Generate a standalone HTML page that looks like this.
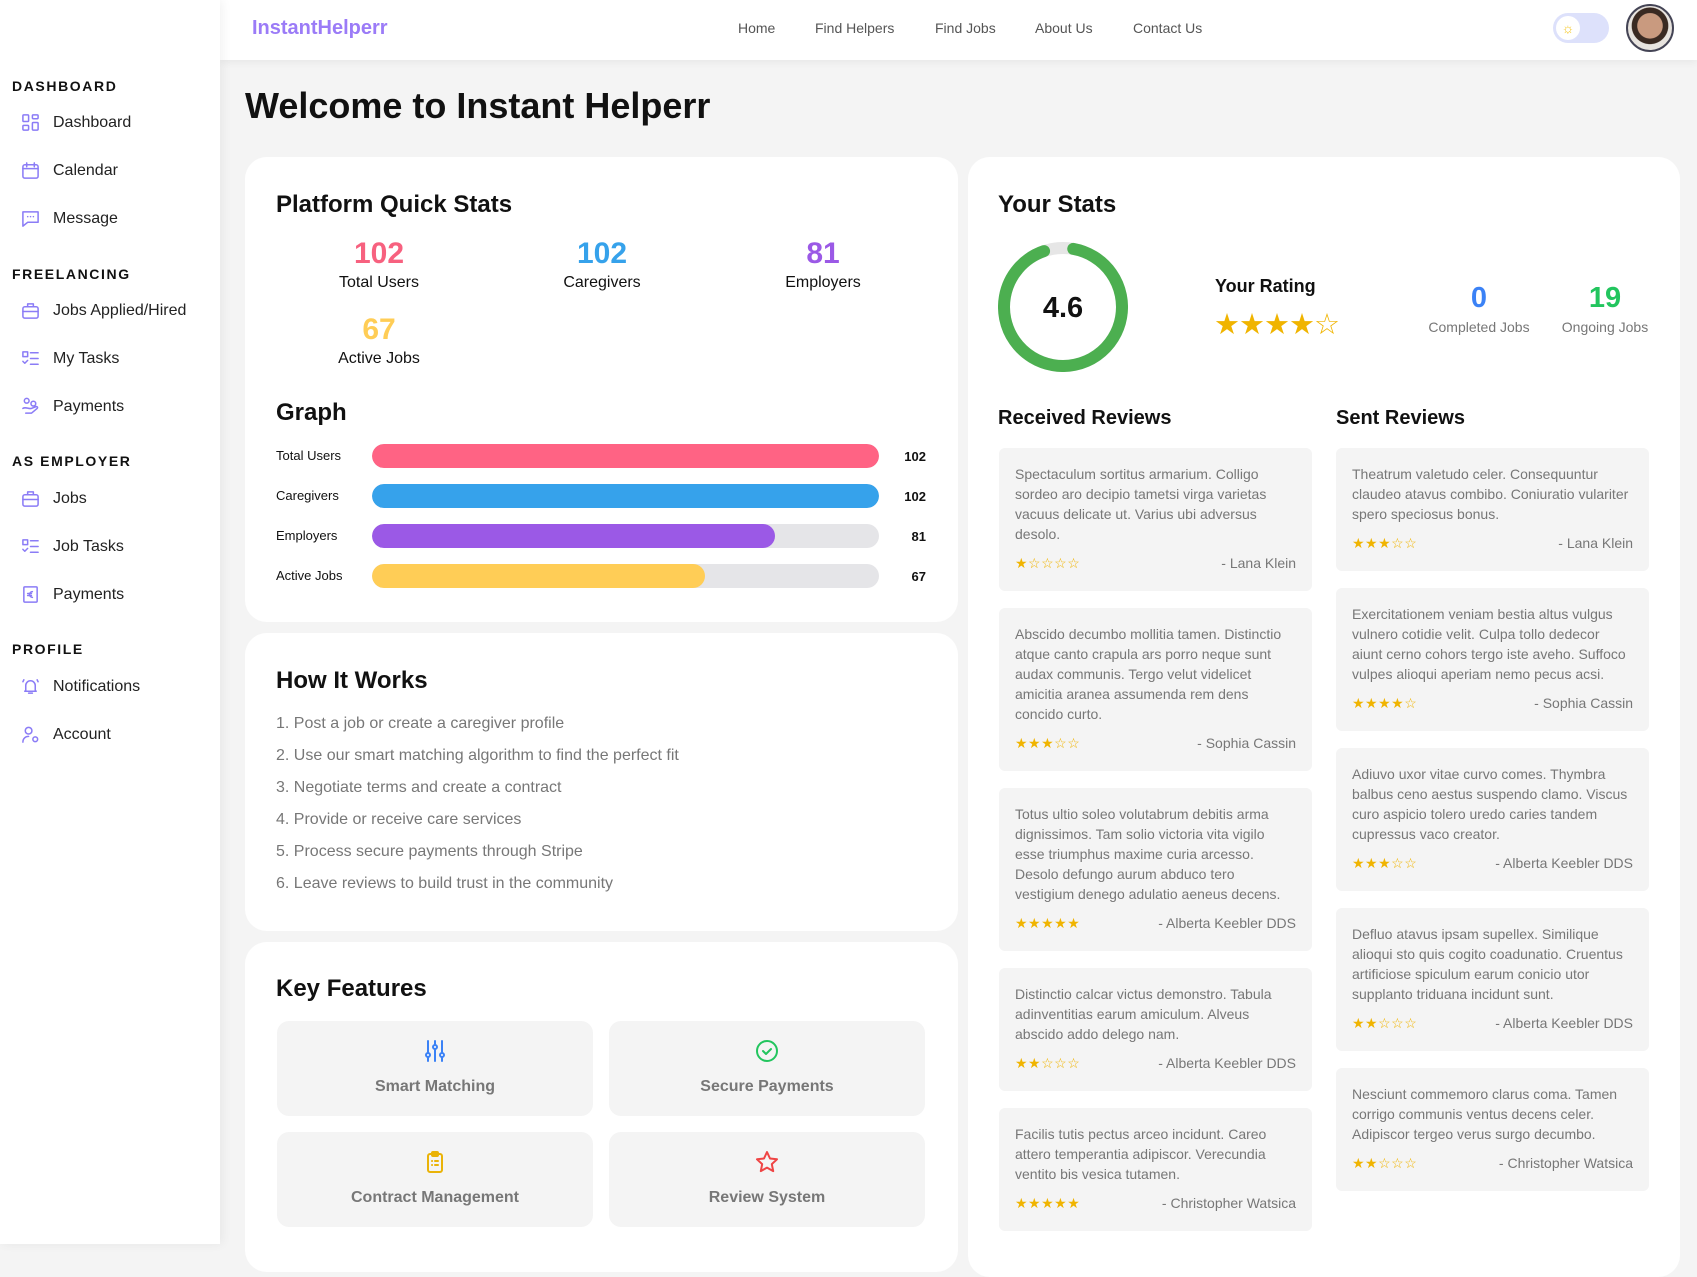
<!DOCTYPE html>
<html><head><meta charset="utf-8">
<style>
*{box-sizing:border-box;margin:0;padding:0}
body{width:1697px;height:1244px;overflow:hidden;background:#f4f4f4;font-family:"Liberation Sans",Arial,sans-serif;position:relative;color:#111}
.side{position:absolute;left:0;top:0;width:220px;height:1244px;background:#fff;box-shadow:2px 0 10px rgba(0,0,0,.06);z-index:3}
.sec{position:absolute;left:12px;font-size:14px;font-weight:bold;letter-spacing:1.6px;color:#111}
.it{position:absolute;left:21px;display:flex;align-items:center;font-size:16px;color:#222}
.it svg{width:19px;height:19px;margin-right:13px;stroke:#8b7cf6;fill:none;stroke-width:1.6;stroke-linecap:round;stroke-linejoin:round}
.hdr{position:absolute;left:220px;top:0;right:0;height:60px;background:#fff;box-shadow:0 2px 8px rgba(0,0,0,.06);z-index:2}
.brand{position:absolute;left:32px;top:17px;font-size:20px;font-weight:bold;color:#9b7bf7}
.nav{position:absolute;top:20px;font-size:14px;color:#555}
.card{position:absolute;background:#fff;border-radius:22px}
h2{font-size:24px;font-weight:bold;position:absolute}
.num{position:absolute;font-size:30px;font-weight:bold;text-align:center;width:200px}
.lbl{position:absolute;font-size:16px;text-align:center;width:200px}
.bl{position:absolute;left:276px;font-size:13px}
.bar{position:absolute;left:372px;width:507px;height:24px;border-radius:12px;background:#e5e5e8;overflow:hidden}
.bar div{height:100%;border-radius:12px}
.bv{position:absolute;right:771px;font-size:13px;font-weight:bold;text-align:right}
.hw{position:absolute;left:276px;font-size:16px;color:#777}
.feat{position:absolute;width:316px;height:95px;background:#f4f4f4;border-radius:12px;text-align:center}
.feat svg{position:absolute;left:146px;top:18px;width:24px;height:24px;fill:none;stroke-width:2;stroke-linecap:round;stroke-linejoin:round}
.feat span{position:absolute;left:0;right:0;top:57px;font-size:16px;font-weight:bold;color:#777}
.col{position:absolute;width:313px;display:flex;flex-direction:column;gap:17px}
.rv{background:#f4f4f4;border-radius:6px;padding:16px 16px 18px 16px;font-size:14px;line-height:20px;color:#777}
.rm{display:flex;justify-content:space-between;margin-top:9px;line-height:20px}
.rm b{font-weight:normal;color:#f0b400;font-size:14px;letter-spacing:0.5px}
</style></head><body>
<div class="side">
<div class="sec" style="top:78px">DASHBOARD</div>
<div class="it" style="top:113px"><svg viewBox="0 0 20 20"><rect x="2" y="2" width="6" height="7" rx="1"/><rect x="12" y="2" width="6" height="4" rx="1"/><rect x="2" y="13" width="6" height="5" rx="1"/><rect x="12" y="10" width="6" height="8" rx="1"/></svg>Dashboard</div>
<div class="it" style="top:161px"><svg viewBox="0 0 20 20"><rect x="2" y="4" width="16" height="14" rx="2"/><path d="M2 8h16M6 2v4M14 2v4"/></svg>Calendar</div>
<div class="it" style="top:209px"><svg viewBox="0 0 20 20"><path d="M2 3h16v11H7l-5 4z"/><path d="M7 8h.1M10 8h.1M13 8h.1"/></svg>Message</div>
<div class="sec" style="top:266px">FREELANCING</div>
<div class="it" style="top:301px"><svg viewBox="0 0 20 20"><rect x="2" y="6" width="16" height="12" rx="2"/><path d="M7 6V3h6v3M2 11h16"/></svg>Jobs Applied/Hired</div>
<div class="it" style="top:349px"><svg viewBox="0 0 20 20"><rect x="2" y="3" width="5" height="5"/><path d="M2 13l2 2 3-3M10 4h8M10 10h8M10 16h8"/></svg>My Tasks</div>
<div class="it" style="top:397px"><svg viewBox="0 0 20 20"><circle cx="6" cy="4" r="2.5"/><circle cx="13" cy="7" r="2.5"/><path d="M2 12c3-2 6 1 9 0l5-2c1 0 2 1 1 2l-6 5H5"/></svg>Payments</div>
<div class="sec" style="top:453px">AS EMPLOYER</div>
<div class="it" style="top:489px"><svg viewBox="0 0 20 20"><rect x="2" y="6" width="16" height="12" rx="2"/><path d="M7 6V3h6v3M2 11h16"/></svg>Jobs</div>
<div class="it" style="top:537px"><svg viewBox="0 0 20 20"><rect x="2" y="3" width="5" height="5"/><path d="M2 13l2 2 3-3M10 4h8M10 10h8M10 16h8"/></svg>Job Tasks</div>
<div class="it" style="top:585px"><svg viewBox="0 0 20 20"><rect x="3" y="2" width="14" height="16" rx="1"/><path d="M12 7a3 3 0 1 0 0 6M7 9h4M7 11h4"/></svg>Payments</div>
<div class="sec" style="top:641px">PROFILE</div>
<div class="it" style="top:677px"><svg viewBox="0 0 20 20"><path d="M5 14V9a5 5 0 0 1 10 0v5l1 1H4zM8 17h4M2 5l1-2M18 5l-1-2"/></svg>Notifications</div>
<div class="it" style="top:725px"><svg viewBox="0 0 20 20"><circle cx="8" cy="6" r="3.5"/><path d="M2 18c0-4 3-6 6-6"/><circle cx="15" cy="15" r="2.5"/></svg>Account</div>
</div>
<div class="hdr">
<div class="brand">InstantHelperr</div>
<div class="nav" style="left:518px">Home</div>
<div class="nav" style="left:595px">Find Helpers</div>
<div class="nav" style="left:715px">Find Jobs</div>
<div class="nav" style="left:815px">About Us</div>
<div class="nav" style="left:913px">Contact Us</div>
<div style="position:absolute;left:1333px;top:13px;width:56px;height:30px;border-radius:15px;background:#dde1fb"><div style="position:absolute;left:3px;top:3px;width:24px;height:24px;border-radius:50%;background:#fff;text-align:center;line-height:24px;color:#f5c518;font-size:14px">☼</div></div>
<div style="position:absolute;left:1406px;top:4px;width:48px;height:48px;border-radius:50%;border:2px solid #445;background:radial-gradient(circle at 50% 45%,#c99a7f 0 38%,#3a2a22 40% 55%,#e8e4df 57%);"></div>
</div>
<div style="position:absolute;left:245px;top:85px;font-size:36px;font-weight:bold">Welcome to Instant Helperr</div>

<div class="card" style="left:245px;top:157px;width:713px;height:465px"></div>
<h2 style="left:276px;top:191px">Platform Quick Stats</h2>
<div class="num" style="left:279px;top:237px;color:#f7617f">102</div><div class="lbl" style="left:279px;top:274px">Total Users</div>
<div class="num" style="left:502px;top:237px;color:#36a2eb">102</div><div class="lbl" style="left:502px;top:274px">Caregivers</div>
<div class="num" style="left:723px;top:237px;color:#9b59e6">81</div><div class="lbl" style="left:723px;top:274px">Employers</div>
<div class="num" style="left:279px;top:313px;color:#ffcd56">67</div><div class="lbl" style="left:279px;top:350px">Active Jobs</div>
<h2 style="left:276px;top:399px">Graph</h2>
<div class="bl" style="top:448px">Total Users</div><div class="bar" style="top:444px"><div style="width:100%;background:#ff6384"></div></div><div class="bv" style="top:449px">102</div>
<div class="bl" style="top:488px">Caregivers</div><div class="bar" style="top:484px"><div style="width:100%;background:#36a2eb"></div></div><div class="bv" style="top:489px">102</div>
<div class="bl" style="top:528px">Employers</div><div class="bar" style="top:524px"><div style="width:79.4%;background:#9b59e6"></div></div><div class="bv" style="top:529px">81</div>
<div class="bl" style="top:568px">Active Jobs</div><div class="bar" style="top:564px"><div style="width:65.7%;background:#ffcd56"></div></div><div class="bv" style="top:569px">67</div>

<div class="card" style="left:245px;top:633px;width:713px;height:298px"></div>
<h2 style="left:276px;top:667px">How It Works</h2>
<div class="hw" style="top:715px">1. Post a job or create a caregiver profile</div>
<div class="hw" style="top:747px">2. Use our smart matching algorithm to find the perfect fit</div>
<div class="hw" style="top:779px">3. Negotiate terms and create a contract</div>
<div class="hw" style="top:811px">4. Provide or receive care services</div>
<div class="hw" style="top:843px">5. Process secure payments through Stripe</div>
<div class="hw" style="top:875px">6. Leave reviews to build trust in the community</div>

<div class="card" style="left:245px;top:942px;width:713px;height:330px"></div>
<h2 style="left:276px;top:975px">Key Features</h2>
<div class="feat" style="left:277px;top:1021px"><svg viewBox="0 0 24 24" stroke="#3b82f6"><path d="M5 2v20M12 2v20M19 2v20"/><circle cx="5" cy="16" r="2" fill="#fff"/><circle cx="12" cy="8" r="2" fill="#fff"/><circle cx="19" cy="16" r="2" fill="#fff"/></svg><span>Smart Matching</span></div>
<div class="feat" style="left:609px;top:1021px"><svg viewBox="0 0 24 24" stroke="#22c55e"><circle cx="12" cy="12" r="10"/><path d="M8 12l3 3 5-5"/></svg><span>Secure Payments</span></div>
<div class="feat" style="left:277px;top:1132px"><svg viewBox="0 0 24 24" stroke="#eab308"><rect x="5" y="4" width="14" height="18" rx="2"/><rect x="9" y="2" width="6" height="4" rx="1"/><path d="M9 11h.1M12 11h3M9 15h.1M12 15h3"/></svg><span>Contract Management</span></div>
<div class="feat" style="left:609px;top:1132px"><svg viewBox="0 0 24 24" stroke="#ef4444"><path d="M12 2l3 6.5 7 .8-5.2 4.8 1.4 7L12 17.6 5.8 21.1l1.4-7L2 9.3l7-.8z"/></svg><span>Review System</span></div>

<div class="card" style="left:968px;top:157px;width:712px;height:1120px"></div>
<h2 style="left:998px;top:191px">Your Stats</h2>
<svg style="position:absolute;left:998px;top:242px" width="130" height="130" viewBox="0 0 130 130"><circle cx="65" cy="65" r="59" fill="none" stroke="#e6e6e6" stroke-width="12"/><circle cx="65" cy="65" r="59" fill="none" stroke="#4caf50" stroke-width="12" stroke-dasharray="341 371" stroke-linecap="round" transform="rotate(-80 65 65)"/><text x="65" y="75" text-anchor="middle" font-family="Liberation Sans" font-size="29" font-weight="bold" fill="#111">4.6</text></svg>
<div style="position:absolute;left:1215px;top:276px;font-size:18px;font-weight:bold">Your Rating</div>
<div style="position:absolute;left:1214px;top:307px;font-size:29px;color:#f0b400;letter-spacing:-1px">★★★★☆</div>
<div style="position:absolute;left:1419px;top:282px;width:120px;text-align:center;font-size:29px;font-weight:bold;color:#3b82f6">0</div>
<div style="position:absolute;left:1419px;top:319px;width:120px;text-align:center;font-size:14px;color:#777">Completed Jobs</div>
<div style="position:absolute;left:1545px;top:282px;width:120px;text-align:center;font-size:29px;font-weight:bold;color:#22c55e">19</div>
<div style="position:absolute;left:1545px;top:319px;width:120px;text-align:center;font-size:14px;color:#777">Ongoing Jobs</div>
<div style="position:absolute;left:998px;top:407px;font-size:20px;font-weight:bold">Received Reviews</div>
<div style="position:absolute;left:1336px;top:407px;font-size:20px;font-weight:bold">Sent Reviews</div>

<div class="col" style="left:999px;top:448px">
<div class="rv">Spectaculum sortitus armarium. Colligo sordeo aro decipio tametsi virga varietas vacuus delicate ut. Varius ubi adversus desolo.<div class="rm"><b>★☆☆☆☆</b><span>- Lana Klein</span></div></div>
<div class="rv">Abscido decumbo mollitia tamen. Distinctio atque canto crapula ars porro neque sunt audax communis. Tergo velut videlicet amicitia aranea assumenda rem dens concido curto.<div class="rm"><b>★★★☆☆</b><span>- Sophia Cassin</span></div></div>
<div class="rv">Totus ultio soleo volutabrum debitis arma dignissimos. Tam solio victoria vita vigilo esse triumphus maxime curia arcesso. Desolo defungo aurum abduco tero vestigium denego adulatio aeneus decens.<div class="rm"><b>★★★★★</b><span>- Alberta Keebler DDS</span></div></div>
<div class="rv">Distinctio calcar victus demonstro. Tabula adinventitias earum amiculum. Alveus abscido addo delego nam.<div class="rm"><b>★★☆☆☆</b><span>- Alberta Keebler DDS</span></div></div>
<div class="rv">Facilis tutis pectus arceo incidunt. Careo attero temperantia adipiscor. Verecundia ventito bis vesica tutamen.<div class="rm"><b>★★★★★</b><span>- Christopher Watsica</span></div></div>
</div>
<div class="col" style="left:1336px;top:448px">
<div class="rv">Theatrum valetudo celer. Consequuntur claudeo atavus combibo. Coniuratio vulariter spero speciosus bonus.<div class="rm"><b>★★★☆☆</b><span>- Lana Klein</span></div></div>
<div class="rv">Exercitationem veniam bestia altus vulgus vulnero cotidie velit. Culpa tollo dedecor aiunt cerno cohors tergo iste aveho. Suffoco vulpes alioqui aperiam nemo pecus acsi.<div class="rm"><b>★★★★☆</b><span>- Sophia Cassin</span></div></div>
<div class="rv">Adiuvo uxor vitae curvo comes. Thymbra balbus ceno aestus suspendo clamo. Viscus curo aspicio tolero uredo caries tandem cupressus vaco creator.<div class="rm"><b>★★★☆☆</b><span>- Alberta Keebler DDS</span></div></div>
<div class="rv">Defluo atavus ipsam supellex. Similique alioqui sto quis cogito coadunatio. Cruentus artificiose spiculum earum conicio utor supplanto triduana incidunt sunt.<div class="rm"><b>★★☆☆☆</b><span>- Alberta Keebler DDS</span></div></div>
<div class="rv">Nesciunt commemoro clarus coma. Tamen corrigo communis ventus decens celer. Adipiscor tergeo verus surgo decumbo.<div class="rm"><b>★★☆☆☆</b><span>- Christopher Watsica</span></div></div>
</div>
</body></html>
